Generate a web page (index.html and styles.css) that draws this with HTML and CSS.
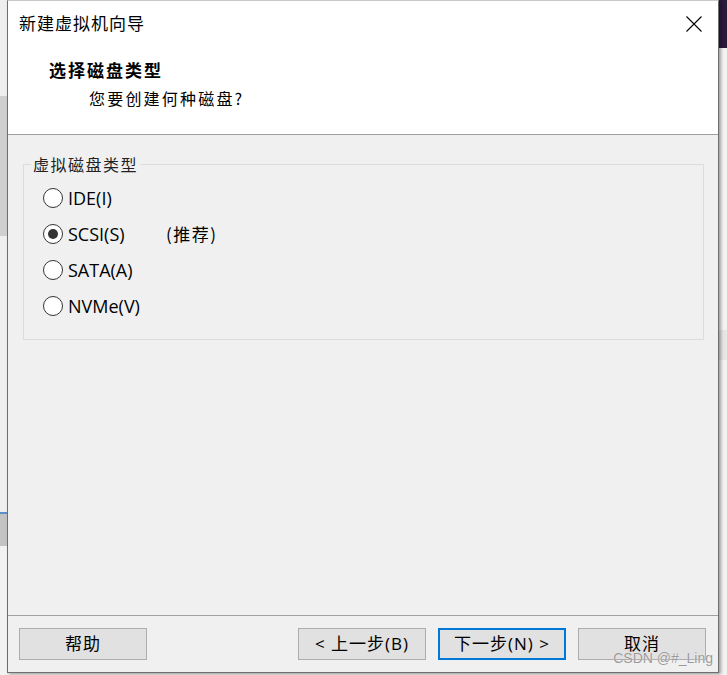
FILE: index.html
```html
<!DOCTYPE html>
<html lang="zh-CN">
<head>
<meta charset="utf-8">
<title>新建虚拟机向导</title>
<link rel="stylesheet" href="styles.css">
</head>
<body>
  <div class="desk-left"></div>
  <div class="dialog">
    <div class="header">
      <div class="titlebar">
        <span class="title">新建虚拟机向导</span>
        <svg class="close" width="16" height="16" viewBox="0 0 16 16" aria-label="关闭">
          <path d="M0.5 0.5 L15.5 15.5 M15.5 0.5 L0.5 15.5" stroke="#000" stroke-width="1.1" fill="none"/>
        </svg>
      </div>
      <div class="heading">选择磁盘类型</div>
      <div class="subtitle">您要创建何种磁盘?</div>
    </div>
    <div class="content">
      <fieldset class="group">
        <legend>虚拟磁盘类型</legend>
        <div class="option"><span class="radio"></span><span class="label">IDE(I)</span></div>
        <div class="option"><span class="radio checked"></span><span class="label">SCSI(S)</span><span class="note">(推荐)</span></div>
        <div class="option"><span class="radio"></span><span class="label">SATA(A)</span></div>
        <div class="option"><span class="radio"></span><span class="label">NVMe(V)</span></div>
      </fieldset>
    </div>
    <div class="footer">
      <button class="btn">帮助</button>
      <div class="spacer"></div>
      <button class="btn">&lt; 上一步(B)</button>
      <button class="btn primary">下一步(N) &gt;</button>
      <button class="btn">取消</button>
    </div>
    <div class="watermark">CSDN @#_Ling</div>
  </div>
  <div class="desk-right"></div>
</body>
</html>
```

FILE: styles.css
```css
* { box-sizing: border-box; }

html, body {
  margin: 0;
  padding: 0;
}

body {
  display: flex;
  height: 675px;
  overflow: hidden;
  background: #ececec;
  font-family: "Open Sans", "Noto Sans CJK SC", sans-serif;
  color: #000;
}

.desk-left {
  width: 7px;
  flex: none;
  background: linear-gradient(to bottom,
    #eeeeee 0 96px,
    #cfcfcf 96px 236px,
    #efefef 236px 512px,
    #5b8fc9 512px 514px,
    #c3c3c3 514px 546px,
    #f2f2f2 546px 675px);
}

.desk-right {
  flex: 1;
  background: linear-gradient(to bottom,
    #2b1a3c 0 48px,
    #f3f3f3 48px 330px,
    #e6e6e6 330px 360px,
    #f2f2f2 360px 675px);
}

.dialog {
  position: relative;
  width: 712px;
  height: 673px;
  flex: none;
  display: flex;
  flex-direction: column;
  border: 1px solid #6e6e6e;
  border-top-color: #c9c9c9;
  background: #f0f0f0;
  box-shadow: 2px 1px 3px rgba(0, 0, 0, 0.35);
}

.header {
  height: 134px;
  flex: none;
  background: #fff;
  border-bottom: 1px solid #a0a0a0;
}

.titlebar {
  height: 44px;
  display: flex;
  align-items: center;
  justify-content: space-between;
  padding: 0 16px 0 11px;
}

.title {
  font-family: "Noto Sans CJK SC", sans-serif;
  font-size: 17px;
  letter-spacing: 1px;
  line-height: 22px;
}

.close {
  display: block;
  margin-top: 1px;
}

.heading {
  margin-top: 14px;
  padding-left: 41px;
  font-family: "Noto Sans CJK SC", sans-serif;
  font-weight: 700;
  font-size: 17px;
  letter-spacing: 2px;
  line-height: 22px;
}

.subtitle {
  margin-top: 6px;
  padding-left: 81px;
  font-family: "Noto Sans CJK SC", sans-serif;
  font-size: 16px;
  letter-spacing: 2.2px;
  line-height: 22px;
}

.content {
  flex: 1;
  padding: 18px 14px 0 15px;
}

.group {
  margin: 0;
  padding: 5px 0 15px 0;
  border: 1px solid #dcdcdc;
  min-width: 0;
}

.group legend {
  margin-left: 7px;
  padding: 0 2px;
  font-family: "Noto Sans CJK SC", sans-serif;
  font-size: 16px;
  letter-spacing: 1.5px;
  line-height: 22px;
  color: #222;
}

.option {
  height: 36px;
  display: flex;
  align-items: center;
  padding-left: 19px;
}

.radio {
  width: 20px;
  height: 20px;
  flex: none;
  border: 1px solid #333;
  border-radius: 50%;
  background: #fff;
  display: flex;
  align-items: center;
  justify-content: center;
}

.radio.checked::after {
  content: "";
  width: 10px;
  height: 10px;
  border-radius: 50%;
  background: #333;
}

.label {
  margin-left: 5px;
  font-size: 18px;
  font-weight: 500;
  line-height: 22px;
  width: 98px;
}

.note {
  font-family: "Noto Sans CJK SC", sans-serif;
  font-size: 17px;
  line-height: 22px;
  letter-spacing: 1.5px;
}

.footer {
  height: 57px;
  flex: none;
  border-top: 1px solid #a0a0a0;
  display: flex;
  align-items: flex-start;
  gap: 12px;
  padding: 12px 12px 0 11px;
}

.spacer { flex: 1; }

.btn {
  width: 128px;
  height: 32px;
  margin: 0;
  padding: 0;
  border: 1px solid #adadad;
  background: #e1e1e1;
  font-family: "Open Sans", "Noto Sans CJK SC", sans-serif;
  font-size: 17px;
  letter-spacing: 1px;
  color: #000;
  line-height: 22px;
}

.btn.primary {
  border: 2px solid #0078d7;
}

.watermark {
  position: absolute;
  right: 5px;
  bottom: 6px;
  font-family: "Liberation Sans", sans-serif;
  font-size: 14px;
  line-height: 16px;
  color: #9a9a9a;
  text-shadow: 0 0 1px #fff;
}
```
